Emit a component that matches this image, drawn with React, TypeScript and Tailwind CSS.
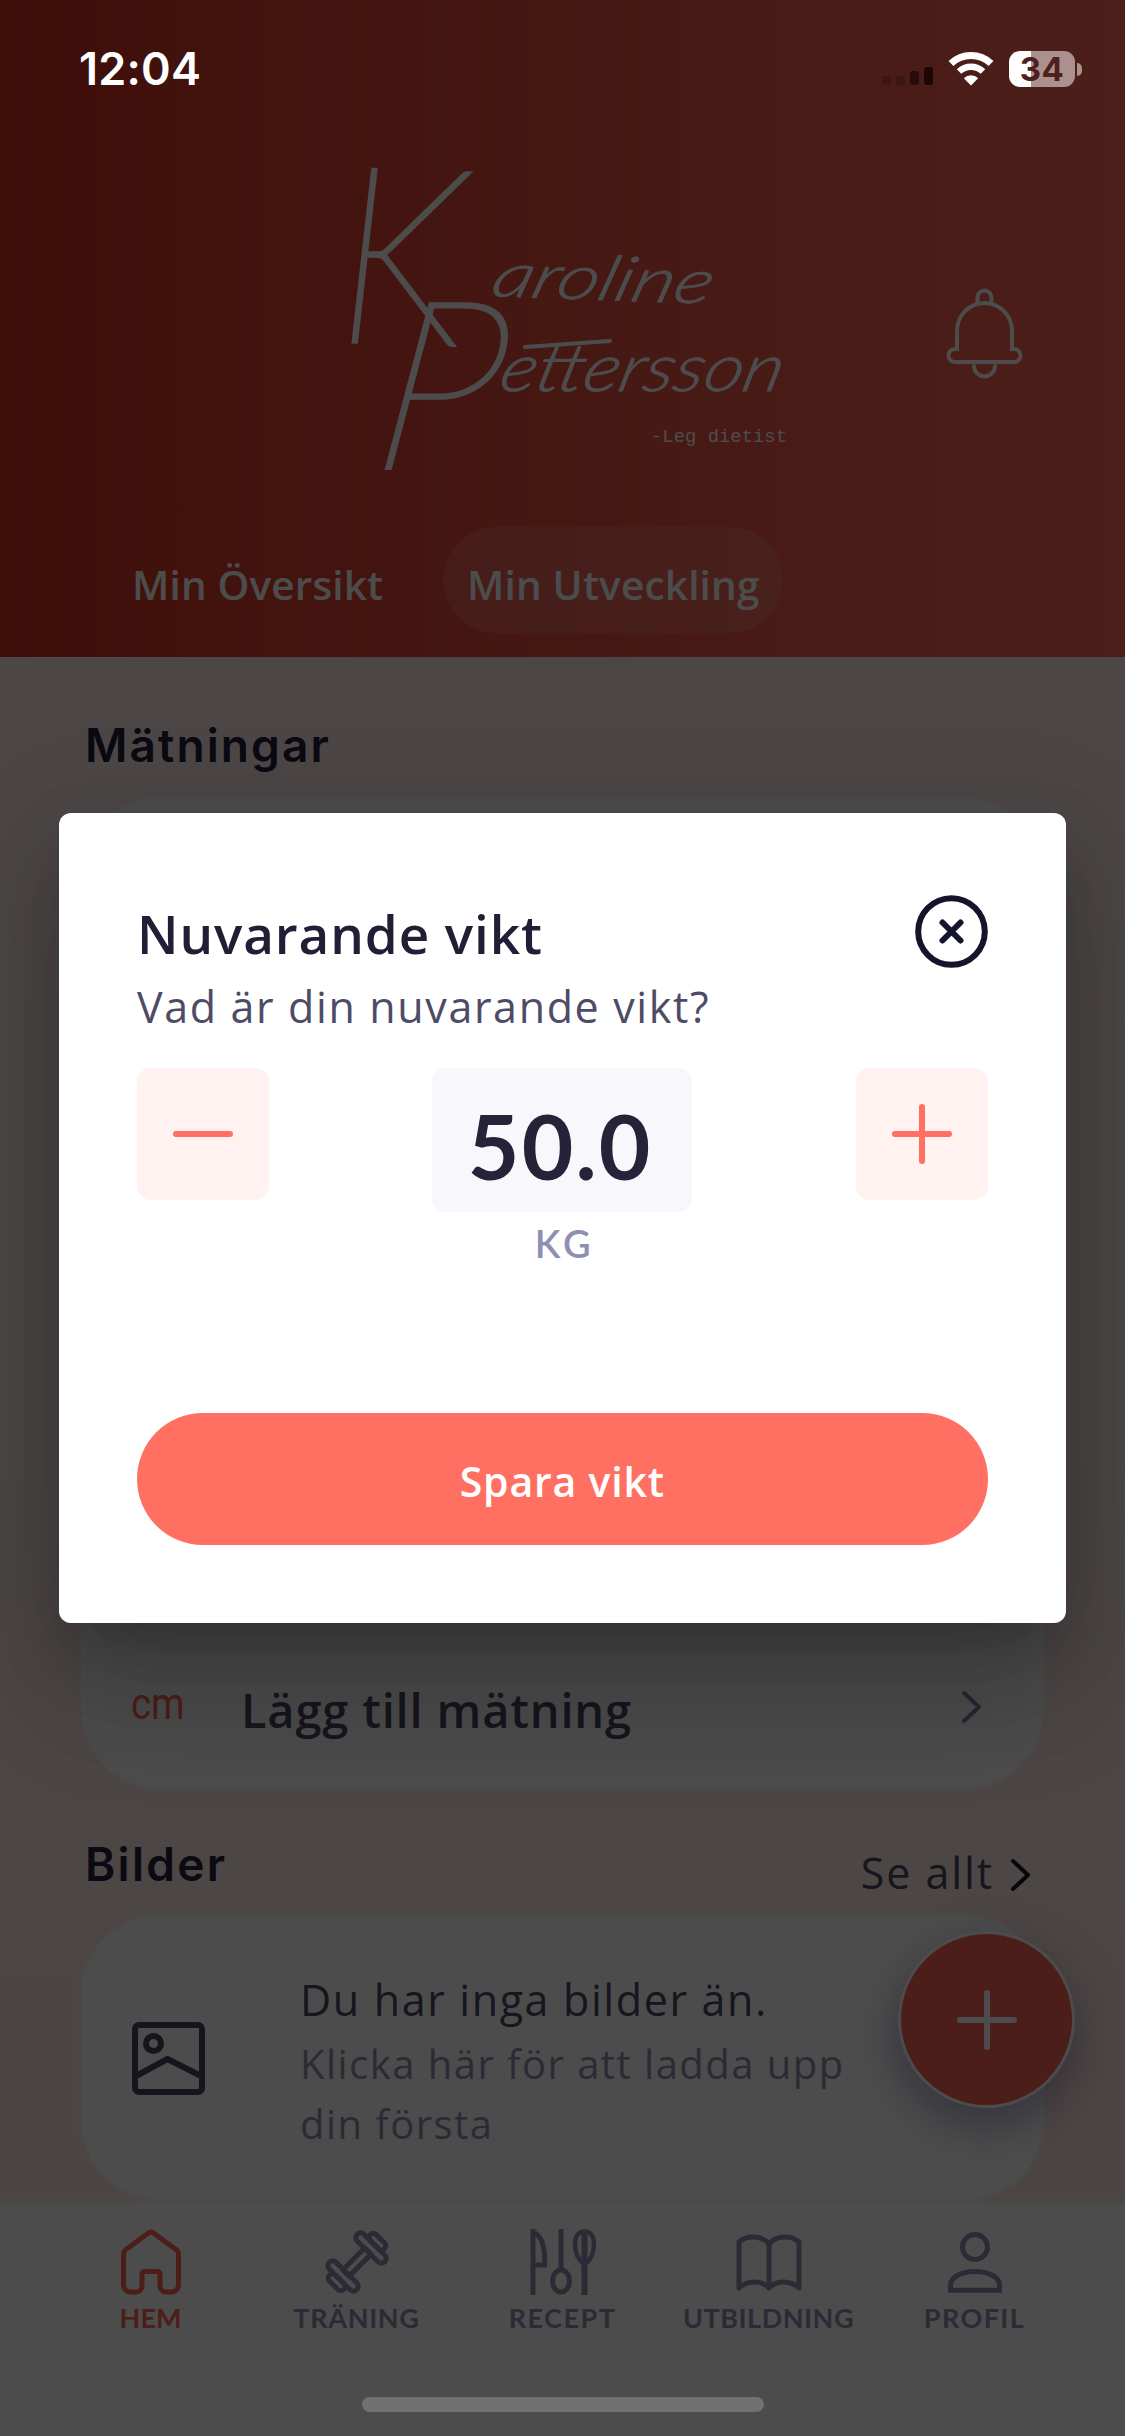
import type { ReactNode } from "react"

function StatusBar() {
  return (
    <div className="absolute inset-x-0 top-0 flex h-[138px] items-center pl-[79px] pr-[43px] text-white">
      <span className="font-['Inter',sans-serif] text-[45px] font-semibold leading-[56px] tracking-[0.2px]">12:04</span>

      <div className="ml-auto flex items-center">
        {/* Signal */}
        <div className="mt-[14px] flex h-[18px] items-end gap-[5px]">
          <div className="h-[9px] w-[9px] rounded-[3px] bg-[#3c1613]" />
          <div className="h-[9px] w-[9px] rounded-[3px] bg-[#3c1613]" />
          <div className="h-[14px] w-[9px] rounded-[3px] bg-[#260c0a]" />
          <div className="h-[18px] w-[9px] rounded-[3px] bg-[#1c0705]" />
        </div>

        {/* Wifi */}
        <svg className="ml-[15px]" width="46" height="34" viewBox="0 0 46 34" fill="none">
          <path d="M3 11.5a29 29 0 0 1 40 0" stroke="currentColor" strokeWidth="7" />
          <path d="M11 19.5a17.5 17.5 0 0 1 24 0" stroke="currentColor" strokeWidth="6.5" />
          <path d="M23 33.5l-7.2-7.3a10.5 10.5 0 0 1 14.4 0z" fill="currentColor" />
        </svg>

        {/* Battery */}
        <div className="ml-[15px] flex h-[36px] w-[66px] items-center justify-center rounded-[11px] bg-[linear-gradient(90deg,#ffffff_22px,#ac908e_22px)]">
          <span className="font-['Inter',sans-serif] text-[33px] font-bold leading-[36px] tracking-[0.5px] text-[#4c201d]">34</span>
        </div>
        <div className="ml-[2px] h-[13px] w-[5px] rounded-r-full bg-[#ac908e]" />
      </div>
    </div>
  )
}

function Logo() {
  return (
    <svg width="500" height="350" viewBox="320 140 500 350" fill="#ffffff" stroke="#ffffff" className="overflow-visible font-['Lato',sans-serif] italic">
      <g transform="translate(337 341) rotate(2) skewX(2)">
        <text fontSize="246" fontWeight="100" strokeWidth="4" textLength="128" lengthAdjust="spacingAndGlyphs">K</text>
      </g>
      <g transform="translate(489 296) rotate(2) skewX(-14)">
        <text fontSize="62" fontWeight="300" strokeWidth="0.8" textLength="219" lengthAdjust="spacingAndGlyphs">aroline</text>
      </g>
      <g transform="translate(370 468) skewX(-8)">
        <text fontSize="234" fontWeight="100" strokeWidth="4" textLength="122" lengthAdjust="spacingAndGlyphs">P</text>
      </g>
      <g transform="translate(497 391) skewX(-14)">
        <text fontSize="66" fontWeight="300" strokeWidth="0.8" textLength="282" lengthAdjust="spacingAndGlyphs">ettersson</text>
      </g>
      <path d="M525 347l85-6" strokeWidth="4" strokeLinecap="round" />
      <text x="651" y="442" fontSize="18.9" stroke="none" className="font-['Liberation_Mono',monospace] not-italic">-Leg dietist</text>
    </svg>
  )
}

function Header() {
  return (
    <header className="flex h-[657px] flex-col bg-linear-to-r from-[#d52f21] via-[#ea513f] to-[#ff685a] pt-[140px] text-white">
      <div className="flex pl-[320px]">
        <Logo />
        <svg className="ml-[125px] mt-[147px]" width="79" height="92" viewBox="0 0 79 92" fill="none" stroke="currentColor" strokeWidth="4" strokeLinecap="round">
          <path d="M32.5 16V10.500a7 7 0 0 1 14 0v6" />
          <path d="M12 62V44a27.500 28 0 0 1 55 0v18h2a6.500 6.500 0 0 1 0 13H10a6.500 6.500 0 0 1 0-13z" />
          <path d="M29 79a10.500 10.500 0 0 0 21 0" />
        </svg>
      </div>

      <div className="mt-[37px] flex text-[40.500px] font-semibold leading-[48px]">
        <div className="ml-[108px] flex h-[106px] w-[335px] items-center pl-6 pt-[10px] tracking-[0.15px]">Min Översikt</div>
        <div className="flex h-[106px] w-[340px] items-center rounded-[53px] bg-white/12 pl-6 pt-[10px] tracking-[0.19px]">Min Utveckling</div>
      </div>
    </header>
  )
}

function Chevron({ className }: { className: string }) {
  return (
    <svg className={className} width="22" height="34" viewBox="0 0 22 34" fill="none" stroke="currentColor" strokeWidth="4" strokeLinecap="round" strokeLinejoin="round">
      <path d="M3 3l15 14L3 31" />
    </svg>
  )
}

function Measurements() {
  return (
    <section className="flex h-[1132px] flex-col pt-[60px]">
      <h2 className="ml-[85px] font-['Inter',sans-serif] text-[46px] font-semibold leading-[56px] tracking-[2.1px] text-[#25213c]">Mätningar</h2>
      <div className="mx-[81px] mt-[25px] flex flex-1 flex-col justify-end rounded-[80px] bg-white shadow-[0_0_10px_#ffffff80]">
        <div className="flex h-[158px] items-center pl-[50px] pr-[61px]">
          <span className="-mt-[13px] w-[110px] origin-left scale-x-85 font-['Roboto',sans-serif] text-[45px] leading-[54px] text-[#ff6456]">cm</span>
          <span className="text-[47px] font-semibold leading-[60px] tracking-[0.83px] text-[#4e4b66]">Lägg till mätning</span>
          <Chevron className="-mt-[7px] ml-auto text-[#8583a8]" />
        </div>
      </div>
    </section>
  )
}

function Pictures() {
  return (
    <section>
      <div className="flex h-[126px] items-start justify-between pl-[85px] pr-[93px] pt-[47px]">
        <h2 className="font-['Inter',sans-serif] text-[46px] font-semibold leading-[56px] tracking-[2.3px] text-[#25213c]">Bilder</h2>
        <div className="mt-[9px] flex items-center">
          <span className="text-[43px] leading-[56px] tracking-[1.92px] text-[#4e4b66]">Se allt</span>
          <Chevron className="ml-[16px] mt-1 text-[#14142b]" />
        </div>
      </div>

      <div className="mx-[81px] flex h-[285px] rounded-[80px] bg-white pl-[51px] shadow-[0_0_10px_#ffffff80]">
        <svg className="mt-[107px] shrink-0 text-[#4a4760]" width="73" height="73" viewBox="0 0 73 73" fill="none" stroke="currentColor" strokeWidth="6" strokeLinejoin="round">
          <rect x="3" y="3" width="67" height="67" rx="4" />
          <circle cx="21.500" cy="21.500" r="7.500" />
          <path d="M4 54l31.500-17L69 54" />
        </svg>
        <div className="ml-[95px] pt-[55px] leading-[60px]">
          <p className="mb-1 text-[43px] tracking-[1.63px] text-[#4e4b66]">Du har inga bilder än.</p>
          <p className="w-[580px] text-[40px] tracking-[1.46px] text-[#8f8fb2]">
            Klicka här för att ladda upp
            <br />
            din första
          </p>
        </div>
      </div>
    </section>
  )
}

function NavItem({ label, active, tracking, children }: { label: string; active?: boolean; tracking: string; children: ReactNode }) {
  return (
    <div className={`flex w-[206px] flex-col items-center gap-[7px] ${active ? "text-[#ff6456]" : "text-[#8f8fb2]"}`}>
      <svg width="66" height="66" viewBox="0 0 66 66" fill="none" stroke="currentColor" strokeWidth="5" strokeLinejoin="round" className="overflow-visible">
        {children}
      </svg>
      <span className={`font-['Lato',sans-serif] text-[27px] font-bold leading-8 ${tracking}`}>{label}</span>
    </div>
  )
}

function BottomNav() {
  return (
    <nav className="mt-[3px] flex h-[233px] justify-center bg-white pt-[26px] shadow-[0_-3px_6px_#ffffff80]">
      <NavItem label="HEM" active tracking="tracking-[0px]">
        <path d="M5.500 25.500c0-2 1-4 2.500-5L30.500 4q2.500-2 5 0L58 20.500c1.500 1 2.500 3 2.500 5V56a7 7 0 0 1-7 7H48a6 6 0 0 1-6-6V45a2.500 2.500 0 0 0-2.500-2.500H26.500A2.500 2.500 0 0 0 24 45v12a6 6 0 0 1-6 6h-5.500a7 7 0 0 1-7-7z" />
      </NavItem>
      <NavItem label="TRÄNING" tracking="tracking-[0.68px]">
        <g transform="rotate(-45 33 33)">
          <rect x="17.500" y="28.500" width="31" height="9" />
          <rect x="57.500" y="23" width="8.500" height="20" rx="4" />
          <rect x="0" y="23" width="8.500" height="20" rx="4" />
          <rect x="48" y="13.500" width="9.500" height="39" rx="4.750" />
          <rect x="8.500" y="13.500" width="9.500" height="39" rx="4.750" />
        </g>
      </NavItem>
      <NavItem label="RECEPT" tracking="tracking-[1.49px]">
        <path d="M3 0v66" />
        <path d="M3 3c9 4 12.500 16 11.500 33H3" strokeLinejoin="miter" />
        <path d="M31 0v40" />
        <ellipse cx="31" cy="52" rx="8.500" ry="11" />
        <path d="M54.500 2v64" strokeWidth="6" />
        <path d="M54.500 2.500C48 2.500 45 8 45 15c0 9 3.500 16 9.500 21C60.500 31 64 24 64 15c0-7-3-12.500-9.500-12.500z" strokeWidth="4.500" />
      </NavItem>
      <NavItem label="UTBILDNING" tracking="tracking-[0.53px]">
        <path d="M3 13C11 6 26 6 33 15c7-9 22-9 30-2v46c-8-8-23-8-30 0-7-8-22-8-30 0zM33 15v44" />
      </NavItem>
      <NavItem label="PROFIL" tracking="tracking-[1.42px]">
        <circle cx="33" cy="18" r="12.500" />
        <path d="M8.500 61.200V56c0-8 11-13.500 24.500-13.500S57.500 48 57.500 56v5.200z" strokeLinejoin="miter" />
      </NavItem>
    </nav>
  )
}

function WeightDialog() {
  return (
    <div className="absolute left-[58.500px] top-[813px] flex h-[810px] w-[1007.500px] flex-col rounded-[12px] bg-white px-[78.500px] pt-[82px] shadow-[0_33px_45px_-21px_#00000033,0_72px_114px_9px_#00000024,0_27px_120px_12px_#0000001f]">
      <div className="flex h-[73px] items-center justify-between">
        <h1 className="pt-[5px] text-[53px] font-semibold leading-[64px] tracking-[0.9px] text-[#211f35]">Nuvarande vikt</h1>
        <svg width="73" height="73" viewBox="0 0 73 73" fill="none" stroke="#14142b" strokeWidth="6" strokeLinecap="round">
          <circle cx="36.500" cy="36.500" r="33.300" />
          <path d="M27.500 27.500l18 18M45.500 27.500l-18 18" />
        </svg>
      </div>
      <p className="mt-[11px] text-[43px] leading-[56px] tracking-[1.63px] text-[#4e4b66]">Vad är din nuvarande vikt?</p>

      <div className="mt-[33px] flex h-[194px] items-start justify-between">
        <button className="flex h-[132px] w-[132px] items-center justify-center rounded-[14px] bg-[#fff2f1]">
          <span className="h-[6px] w-[60px] rounded-full bg-[#ff7062]" />
        </button>
        <div className="flex flex-col items-center">
          <div className="flex h-[144px] w-[260px] items-center justify-center rounded-[14px] bg-[#f7f7fc] pr-[4px] pt-[11px] font-['Lato',sans-serif] text-[89px] font-bold leading-[108px] tracking-[2.2px] text-[#262338]">50.0</div>
          <span className="mt-[11px] pl-[5px] font-['Lato',sans-serif] text-[38px] font-semibold leading-10 tracking-[4px] text-[#8f8fb2]">KG</span>
        </div>
        <button className="flex h-[132px] w-[132px] items-center justify-center rounded-[14px] bg-[#fff2f1]">
          <svg width="60" height="60" viewBox="0 0 60 60" stroke="#ff7062" strokeWidth="6" strokeLinecap="round">
            <path d="M3 30h54M30 3v54" />
          </svg>
        </button>
      </div>

      <button className="mt-[151px] flex h-[132px] items-center justify-center rounded-full bg-[#ff7062] pt-[4px] text-[41px] font-semibold leading-[50px] tracking-[0.8px] text-white">
        Spara vikt
      </button>
    </div>
  )
}

export default function App() {
  return (
    <div className="relative h-[2436px] w-[1125px] overflow-hidden bg-linear-to-b from-[#feedea] from-60% to-[#ffe4e0] font-['Open_Sans',sans-serif]">
      <Header />
      <Measurements />
      <Pictures />
      <BottomNav />

      {/* Floating add button */}
      <div className="absolute left-[898px] top-[1931px] flex h-[177px] w-[177px] items-center justify-center rounded-full border-3 border-white bg-[#ff6456] shadow-[0_16px_46px_#50508c80]">
        <svg width="60" height="60" viewBox="0 0 60 60" stroke="#ffffff" strokeWidth="6" strokeLinecap="round">
          <path d="M3 30h54M30 3v54" />
        </svg>
      </div>

      {/* Backdrop */}
      <div className="absolute inset-0 bg-black/70" />
      <WeightDialog />
      <StatusBar />
      <div className="absolute bottom-[24px] left-[362px] h-[15px] w-[402px] rounded-full bg-[#717171]" />
    </div>
  )
}
